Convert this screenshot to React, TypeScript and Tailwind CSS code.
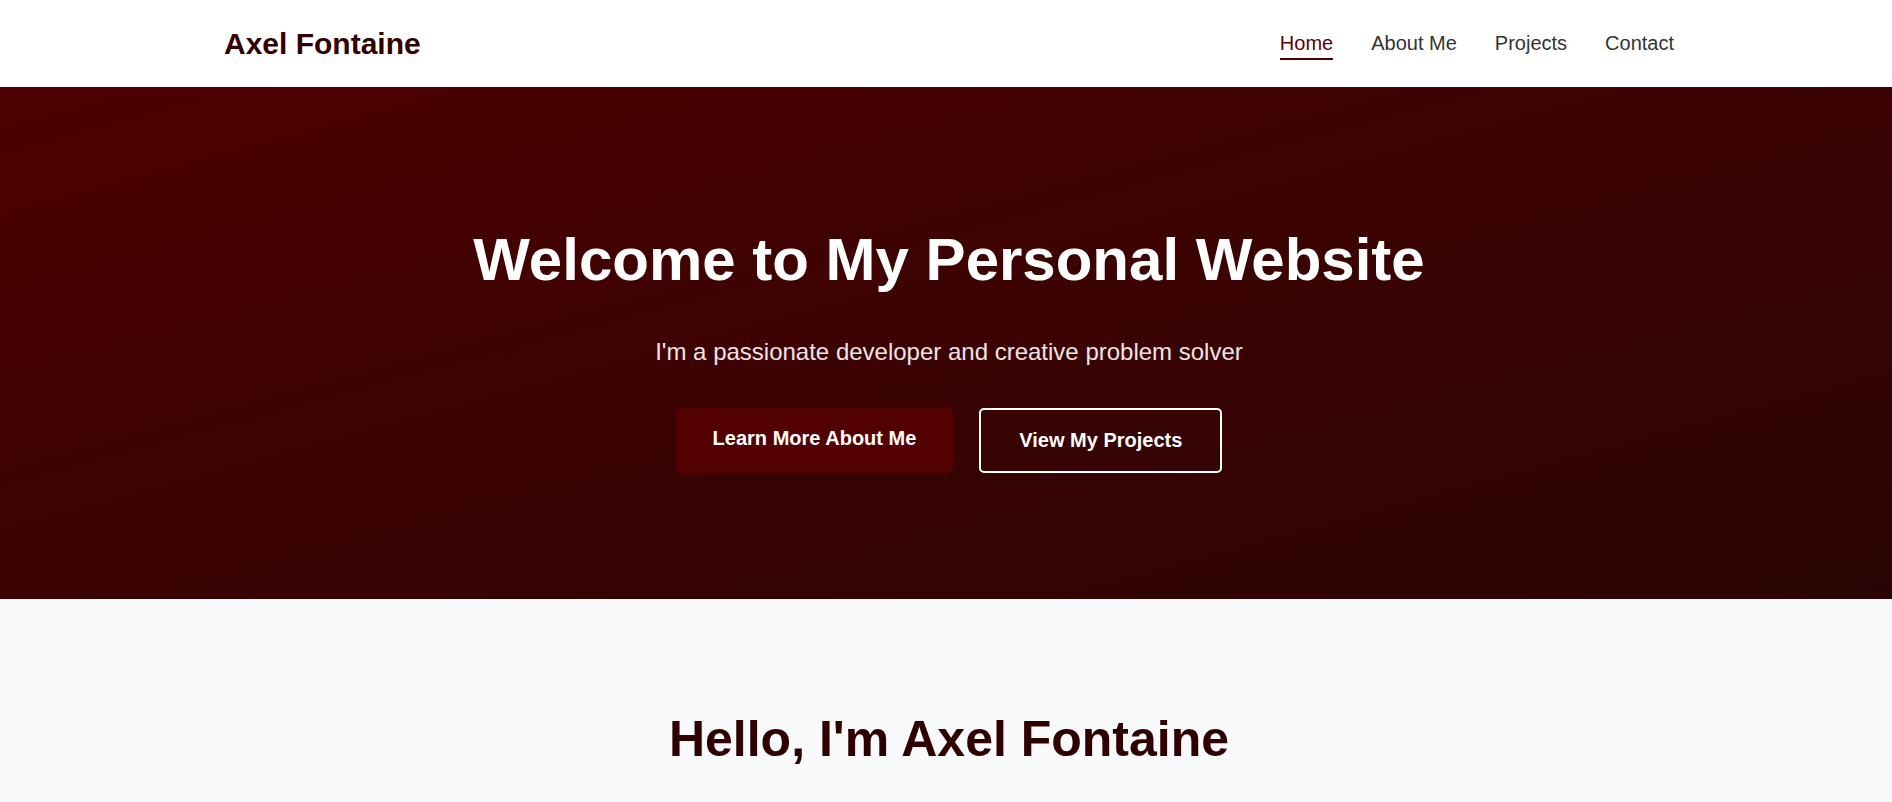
import React from "react";

const font = { fontFamily: '"Liberation Sans", Arial, Helvetica, sans-serif' };

function NavLink({ label, active }: { label: string; active?: boolean }) {
  return (
    <a
      href="#"
      className={
        "relative text-[20px] leading-[23px] " +
        (active ? "text-[#5a0000]" : "text-[#333333]")
      }
    >
      {label}
      {active && (
        <span className="absolute left-0 right-0 top-full mt-[3px] h-[2px] bg-[#4a0000]" />
      )}
    </a>
  );
}

export default function App() {
  return (
    <div style={font} className="min-h-screen bg-[#f8f9fa]">
      <header className="h-[87px] bg-white pl-[6px]">
        <div className="mx-auto flex h-full max-w-[1450px] items-center justify-between">
          <div className="text-[30px] font-bold leading-[34px] text-[#330000]">Axel Fontaine</div>
          <nav className="flex items-center gap-[38px]">
            <NavLink label="Home" active />
            <NavLink label="About Me" />
            <NavLink label="Projects" />
            <NavLink label="Contact" />
          </nav>
        </div>
      </header>

      <section className="flex flex-col items-center bg-gradient-to-br from-[#4d0000] to-[#2a0404] pl-[6px] pt-[137px] pb-[126px] text-center">
        <h1 className="text-[60px] font-bold leading-[72px] text-white">Welcome to My Personal Website</h1>
        <p className="mt-[38px] text-[24px] leading-[36px] text-[#f0e4e4]">
          I'm a passionate developer and creative problem solver
        </p>
        <div className="mt-[38px] flex items-stretch gap-[26px]">
          <a
            href="#"
            className="rounded-[5px] bg-[#520000] px-[37px] py-[19px] text-[20px] font-bold leading-[23px] text-white"
          >
            Learn More About Me
          </a>
          <a
            href="#"
            className="rounded-[5px] border-2 border-white px-[38px] py-[19px] text-[20px] font-bold leading-[23px] text-white"
          >
            View My Projects
          </a>
        </div>
      </section>

      <section className="bg-[#f8f9fa] pl-[6px] pt-[110px] pb-[60px] text-center">
        <h2 className="text-[50px] font-bold leading-[60px] text-[#2e0000]">Hello, I'm Axel Fontaine</h2>
      </section>
    </div>
  );
}
